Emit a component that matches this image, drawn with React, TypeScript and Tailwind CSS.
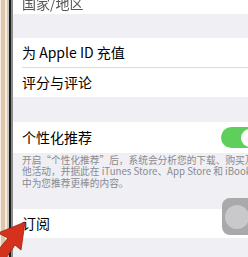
export default function App() {
  const font = { fontFamily: '"Noto Sans CJK SC", "Liberation Sans", sans-serif' };
  return (
    <div
      className="relative flex w-[248px] h-[257px] overflow-hidden bg-[#efeff4]"
      style={font}
    >
      {/* phone frame edge */}
      <div className="flex h-full shrink-0">
        <div className="w-px bg-[#f4eee6]" />
        <div className="w-[4px] bg-[#dcc8a8]" />
        <div className="w-[2px] bg-[#f2ece2]" />
        <div className="w-[2px] bg-[#c9c6c0]" />
        <div className="w-[2px] bg-[#1c1c1c]" />
        <div className="w-[2px] bg-[#8d8d8d]" />
      </div>

      <div className="flex-1 min-w-0 flex flex-col">
        <div className="h-[14px] bg-white pl-[9px] overflow-hidden">
          <div className="text-[14px] leading-[14px] text-[#555] mt-[-4px] blur-[0.3px]">
            国家/地区
          </div>
        </div>
        <div className="h-[24px] shrink-0" />
        <div className="bg-white">
          <div className="h-[29px] flex items-center pl-[9px] text-[14px] text-black">
            为 Apple ID 充值
          </div>
          <div className="h-px ml-[9px] bg-[#dcdce0]" />
          <div className="h-[29px] flex items-center pl-[9px] text-[14px] text-black">
            评分与评论
          </div>
        </div>
        <div className="h-[25px] shrink-0" />
        <div className="h-[31px] shrink-0 bg-white flex items-center justify-between pl-[9px]">
          <span className="text-[14px] text-black">个性化推荐</span>
          <div className="w-[40px] h-[21px] rounded-full bg-[#5fcf5b] translate-x-[13px] flex items-center justify-end pr-[2px] shrink-0">
            <div className="w-[18px] h-[18px] rounded-full bg-white" />
          </div>
        </div>
        <div className="pl-[9px] pt-[2px] text-[9.7px] leading-[11.3px] text-[#8a8a8f] whitespace-nowrap">
          <div>开启“个性化推荐”后，系统会分析您的下载、购买及其</div>
          <div>他活动，并据此在 iTunes Store、App Store 和 iBooks</div>
          <div>中为您推荐更棒的内容。</div>
        </div>
        <div className="h-[20px] shrink-0" />
        <div className="h-[29px] shrink-0 bg-white flex items-center pl-[9px] text-[14px] text-black">
          订阅
        </div>
      </div>

      {/* assistive touch button */}
      <div className="absolute left-[222px] top-[198px] w-[40px] h-[37px] rounded-[8px] bg-[#a9a9ab] flex items-center justify-center">
        <div className="w-[24px] h-[24px] rounded-full bg-[#c9c9cb] ml-[-10px]" />
      </div>

      {/* red arrow */}
      <svg
        className="absolute left-0 top-[218px]"
        width="34"
        height="39"
        viewBox="0 0 34 39"
      >
        <polygon
          points="25,4 21,32 15,27 4,43 -6,37 8,20 -2,15"
          fill="#d5321d"
          stroke="#9c1e10"
          strokeWidth="0.8"
        />
      </svg>
    </div>
  );
}
